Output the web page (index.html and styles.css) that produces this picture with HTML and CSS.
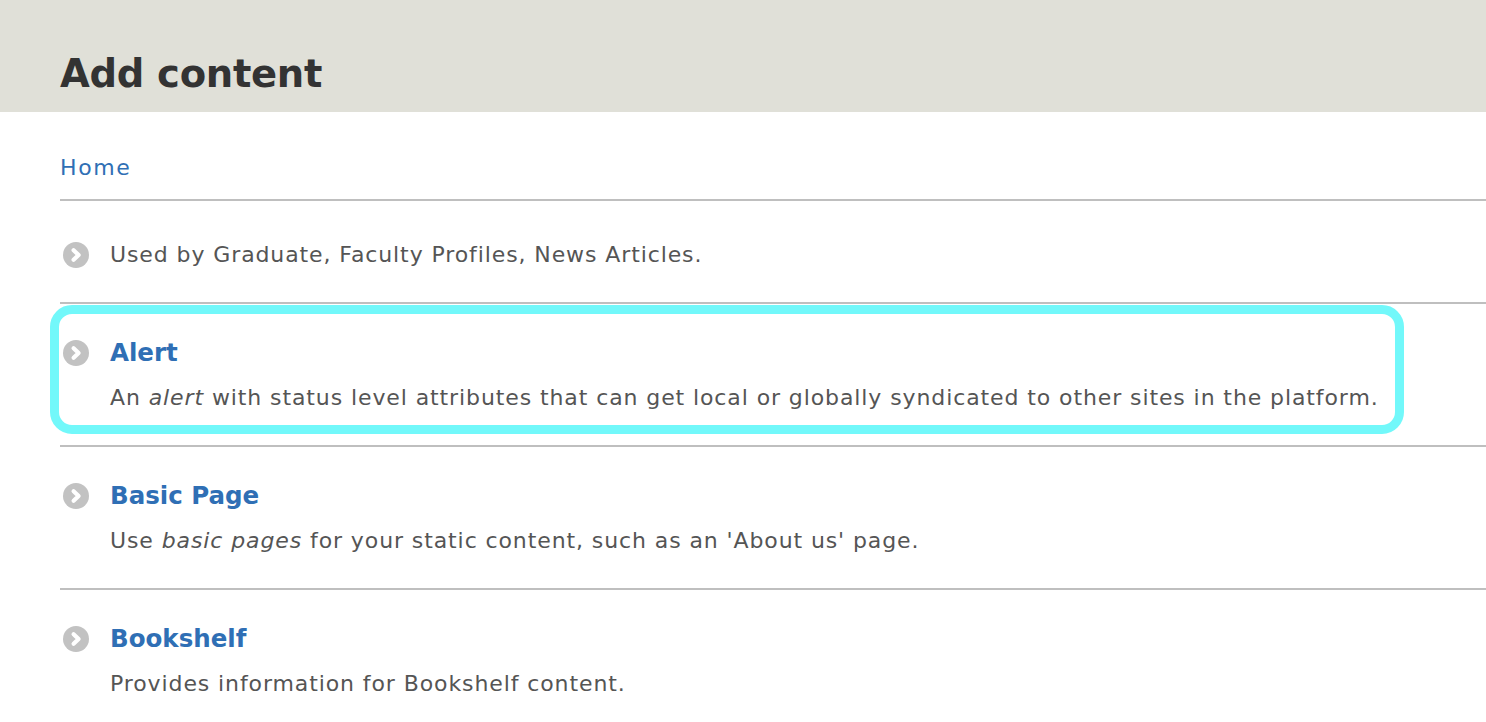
FILE: index.html
```html
<!DOCTYPE html>
<html lang="en">
<head>
<meta charset="utf-8">
<title>Add content</title>
<link rel="stylesheet" href="styles.css">
</head>
<body>
<header class="page-head">
  <h1 class="page-title">Add content</h1>
</header>
<main class="content">
  <nav class="breadcrumb"><a href="#">Home</a></nav>
  <ul class="admin-list">
    <li class="item item--plain">
      <span class="icon"><svg viewBox="0 0 26 26" width="26" height="26"><circle cx="13" cy="13" r="13" fill="#c2c2c2"/><path d="M10.6 8.2 L15.6 13 L10.6 17.8" fill="none" stroke="#fff" stroke-width="4.2" stroke-linecap="round" stroke-linejoin="round"/></svg></span>
      <div class="body">
        <p class="desc">Used by Graduate, Faculty Profiles, News Articles.</p>
      </div>
    </li>
    <li class="item item--highlight">
      <span class="icon"><svg viewBox="0 0 26 26" width="26" height="26"><circle cx="13" cy="13" r="13" fill="#c2c2c2"/><path d="M10.6 8.2 L15.6 13 L10.6 17.8" fill="none" stroke="#fff" stroke-width="4.2" stroke-linecap="round" stroke-linejoin="round"/></svg></span>
      <div class="body">
        <a class="title" href="#">Alert</a>
        <p class="desc">An <em>alert</em> with status level attributes that can get local or globally syndicated to other sites in the platform.</p>
      </div>
      <span class="highlight"></span>
    </li>
    <li class="item">
      <span class="icon"><svg viewBox="0 0 26 26" width="26" height="26"><circle cx="13" cy="13" r="13" fill="#c2c2c2"/><path d="M10.6 8.2 L15.6 13 L10.6 17.8" fill="none" stroke="#fff" stroke-width="4.2" stroke-linecap="round" stroke-linejoin="round"/></svg></span>
      <div class="body">
        <a class="title" href="#">Basic Page</a>
        <p class="desc">Use <em>basic pages</em> for your static content, such as an 'About us' page.</p>
      </div>
    </li>
    <li class="item">
      <span class="icon"><svg viewBox="0 0 26 26" width="26" height="26"><circle cx="13" cy="13" r="13" fill="#c2c2c2"/><path d="M10.6 8.2 L15.6 13 L10.6 17.8" fill="none" stroke="#fff" stroke-width="4.2" stroke-linecap="round" stroke-linejoin="round"/></svg></span>
      <div class="body">
        <a class="title" href="#">Bookshelf</a>
        <p class="desc">Provides information for Bookshelf content.</p>
      </div>
    </li>
  </ul>
</main>
</body>
</html>
```

FILE: styles.css
```css
html, body {
  margin: 0;
  padding: 0;
  background: #fff;
}
body {
  font-family: "DejaVu Sans", "Liberation Sans", sans-serif;
  color: #555;
  overflow: hidden;
}
.page-head {
  background: #e0e0d8;
  height: 112px;
  padding: 0 60px;
  box-sizing: border-box;
  display: flex;
  align-items: flex-end;
}
.page-title {
  margin: 0 0 14px;
  font-size: 38.5px;
  line-height: 48px;
  font-weight: bold;
  color: #333;
  letter-spacing: -0.3px;
}
.content {
  padding-left: 60px;
}
.breadcrumb {
  height: 89px;
  display: flex;
  align-items: flex-end;
  padding-bottom: 15px;
  border-bottom: 2px solid #bfbfbf;
  box-sizing: border-box;
  font-size: 22px;
  line-height: 32px;
  letter-spacing: 1.6px;
}
.breadcrumb a {
  color: #2f6fb5;
  text-decoration: none;
}
.admin-list {
  list-style: none;
  margin: 0;
  padding: 0;
}
.item {
  position: relative;
  display: flex;
  gap: 21px;
  padding: 33px 0 31px 3px;
  border-bottom: 2px solid #bfbfbf;
}
.item--plain {
  padding: 38px 0 31px 3px;
}
.icon {
  flex: none;
  width: 26px;
  height: 32px;
  display: flex;
  align-items: center;
}
.icon svg {
  display: block;
}
.body {
  display: flex;
  flex-direction: column;
  gap: 13px;
}
.title {
  font-size: 24.5px;
  line-height: 32px;
  font-weight: bold;
  color: #2f6fb5;
  text-decoration: none;
}
.desc {
  margin: 0;
  font-size: 22px;
  line-height: 32px;
  letter-spacing: 0.9px;
  color: #555;
}
.desc em {
  font-style: italic;
}
.highlight {
  position: absolute;
  left: -10px;
  top: 1px;
  width: 1354px;
  height: 129px;
  box-sizing: border-box;
  border: 9px solid #72f8fa;
  border-radius: 22px;
  pointer-events: none;
}
```
